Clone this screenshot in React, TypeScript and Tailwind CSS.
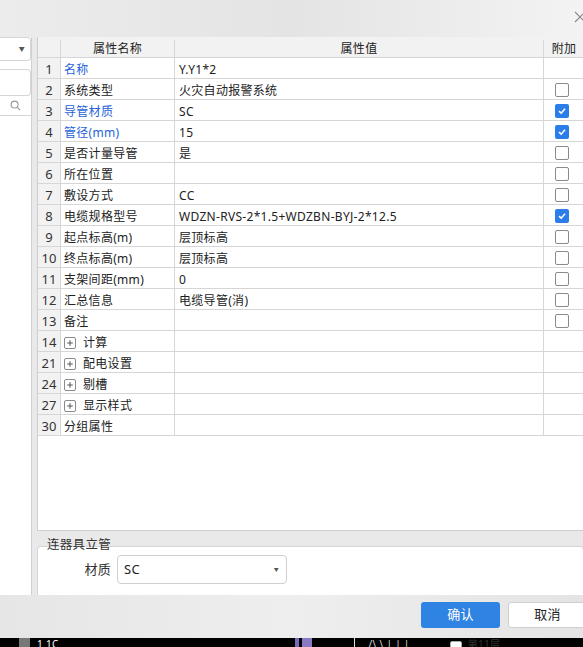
import React from "react";

type Row = {
  no: number;
  name: string;
  value?: string;
  blue?: boolean;
  check?: "on" | "off";
  group?: boolean;
};

const rows: Row[] = [
  { no: 1, name: "名称", value: "Y.Y1*2", blue: true },
  { no: 2, name: "系统类型", value: "火灾自动报警系统", check: "off" },
  { no: 3, name: "导管材质", value: "SC", blue: true, check: "on" },
  { no: 4, name: "管径(mm)", value: "15", blue: true, check: "on" },
  { no: 5, name: "是否计量导管", value: "是", check: "off" },
  { no: 6, name: "所在位置", value: "", check: "off" },
  { no: 7, name: "敷设方式", value: "CC", check: "off" },
  { no: 8, name: "电缆规格型号", value: "WDZN-RVS-2*1.5+WDZBN-BYJ-2*12.5", check: "on" },
  { no: 9, name: "起点标高(m)", value: "层顶标高", check: "off" },
  { no: 10, name: "终点标高(m)", value: "层顶标高", check: "off" },
  { no: 11, name: "支架间距(mm)", value: "0", check: "off" },
  { no: 12, name: "汇总信息", value: "电缆导管(消)", check: "off" },
  { no: 13, name: "备注", value: "", check: "off" },
  { no: 14, name: "计算", group: true },
  { no: 21, name: "配电设置", group: true },
  { no: 24, name: "剔槽", group: true },
  { no: 27, name: "显示样式", group: true },
  { no: 30, name: "分组属性" },
];

function Check({ on }: { on: boolean }) {
  if (on) {
    return (
      <span className="flex h-[14px] w-[14px] items-center justify-center rounded-[2px] bg-[#2b7de9]">
        <svg width="10" height="10" viewBox="0 0 10 10">
          <path d="M2 5.2 L4.2 7.2 L8 2.8" fill="none" stroke="#fff" strokeWidth="1.6" />
        </svg>
      </span>
    );
  }
  return <span className="block h-[14px] w-[14px] rounded-[2px] border border-[#8a8a8a] bg-white" />;
}

function PlusBox() {
  return (
    <span className="mr-[7px] flex h-[12px] w-[12px] items-center justify-center rounded-[2px] border border-[#8a8a8a]">
      <svg width="8" height="8" viewBox="0 0 8 8">
        <path d="M4 1.2 V6.8 M1.2 4 H6.8" stroke="#555" strokeWidth="1" />
      </svg>
    </span>
  );
}

export default function App() {
  const font = { fontFamily: '"Noto Sans", "Noto Sans CJK SC", sans-serif' };
  return (
    <div
      className="relative flex h-[647px] w-[583px] flex-col overflow-hidden bg-[#e9e9e9] text-[12px] tracking-[0.3px] text-[#222]"
      style={font}
    >
      {/* top blurred title area */}
      <div className="relative h-[37px] shrink-0 bg-gradient-to-r from-[#ececec] via-[#e4e4e4] to-[#f3f3f3]">
        <svg className="absolute left-[574px] top-[11px]" width="12" height="12" viewBox="0 0 12 12">
          <path d="M1 1 L11 11 M11 1 L1 11" stroke="#8a8a8a" strokeWidth="1.1" />
        </svg>
      </div>

      <div className="flex h-[558px] shrink-0">
        {/* left panel */}
        <div className="flex w-[32px] shrink-0 flex-col border-r border-[#d0d0d0] bg-white">
          <div className="flex h-[24px] items-center justify-end rounded-r-[4px] border border-l-0 border-[#d6d6d6] pr-[5px]">
            <span className="text-[6px] text-[#555]">▼</span>
          </div>
          <div className="mt-[8px] h-[27px] rounded-r-[4px] border border-l-0 border-[#d6d6d6]" />
          <div className="flex h-[20px] items-center justify-end border-b border-[#d6d6d6] pr-[10px]">
            <svg width="11" height="11" viewBox="0 0 12 12">
              <circle cx="5" cy="5" r="3.8" fill="none" stroke="#999" strokeWidth="1.2" />
              <path d="M8 8 L11 11" stroke="#999" strokeWidth="1.3" />
            </svg>
          </div>
          <div className="flex-1" />
        </div>

        <div className="ml-[5px] flex flex-1 flex-col">
          {/* grid */}
          <div className="h-[494px] shrink-0 border-b border-l border-[#cfcfcf] bg-white">
            <div className="flex h-[21px] border-b border-[#d6d6d6] bg-[#f2f2f2] pt-[3px]">
              <div className="w-[23px] shrink-0 border-r border-[#d6d6d6]" />
              <div className="flex w-[114px] shrink-0 items-center justify-center border-r border-[#d6d6d6]">属性名称</div>
              <div className="flex w-[369px] shrink-0 items-center justify-center border-r border-[#d6d6d6]">属性值</div>
              <div className="flex w-[40px] shrink-0 items-center justify-center">附加</div>
            </div>
            {rows.map((r) => (
              <div key={r.no} className="flex h-[21px] border-b border-[#d6d6d6]">
                <div className="flex w-[23px] shrink-0 items-center justify-center border-r border-[#d6d6d6] bg-[#f2f2f2] pt-[4px] text-[13px] tracking-normal text-[#333]">
                  {r.no}
                </div>
                <div
                  className={`flex w-[114px] shrink-0 items-center whitespace-nowrap border-r border-[#d6d6d6] pl-[3px] pt-[4px] ${
                    r.blue ? "text-[#2563d9]" : ""
                  }`}
                >
                  {r.group && <PlusBox />}
                  {r.name}
                </div>
                <div className="flex w-[369px] shrink-0 items-center whitespace-nowrap border-r border-[#d6d6d6] pl-[4px] pt-[4px]">
                  {r.value}
                </div>
                <div className="flex w-[40px] shrink-0 items-center justify-center pr-[4px] pt-[2px]">
                  {r.check && <Check on={r.check === "on"} />}
                </div>
              </div>
            ))}
          </div>

          {/* group box */}
          <div className="flex flex-1 flex-col pt-[15px]">
            <div className="relative flex-1 rounded-t-[4px] border border-b-0 border-[#d6d6d6] bg-white">
              <span className="absolute left-[8px] top-[-10px] px-[1px] text-[12.5px] leading-[16px] text-[#333]">
                连器具立管
              </span>
              <div className="mt-[8px] flex items-center">
                <span className="w-[79px] pr-[6px] text-right text-[13px] text-[#333]">材质</span>
                <div className="flex h-[29px] w-[170px] items-center justify-between rounded-[4px] border border-[#cfcfcf] pl-[6px] pr-[7px] text-[13px]">
                  <span>SC</span>
                  <span className="text-[5px] text-[#555]">▼</span>
                </div>
              </div>
            </div>
          </div>
        </div>
      </div>

      {/* footer */}
      <div className="flex h-[43px] shrink-0 items-start justify-end gap-[8px] bg-gradient-to-r from-[#e6e6e6] via-[#eeeeee] to-[#e4e4e4] pt-[7px]">
        <button className="h-[26px] w-[79px] rounded-[3px] bg-[#2f83e2] text-[13px] text-white">确认</button>
        <button className="-mr-[4px] h-[26px] w-[79px] rounded-[3px] border border-[#cfcfcf] bg-white text-[13px] text-[#222]">
          取消
        </button>
      </div>

      {/* dark strip below */}
      <div className="flex h-[9px] shrink-0 items-start overflow-hidden bg-black text-[10px] leading-[12px] text-white">
        <span className="ml-[19px] h-[9px] w-[11px] bg-[#777]" />
        <span className="ml-[7px]">1 1C</span>
        <span className="ml-[236px] h-[9px] w-[4px] bg-[#7b68b8]" />
        <span className="ml-[3px] h-[9px] w-[10px] bg-[#8a78c4]" />
        <span className="ml-[42px] h-[9px] w-px bg-[#ddd]" />
        <span className="ml-[14px] text-[#ddd]">/\ \ | | |</span>
        <span className="ml-[40px] mt-[3px] h-[8px] w-[12px] rounded-[2px] border border-[#aaa] bg-white" />
        <span className="ml-[6px] text-[#333]">第11层</span>
      </div>
    </div>
  );
}
